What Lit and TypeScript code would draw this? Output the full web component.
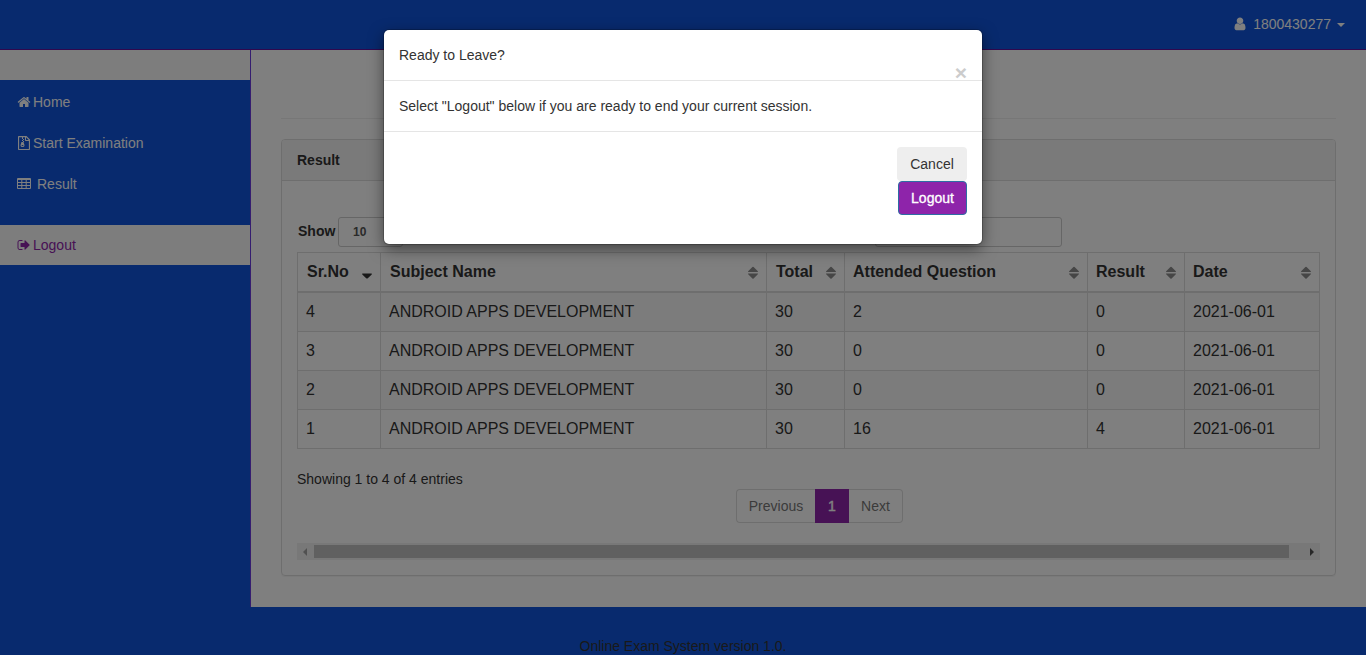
import { LitElement, html, css, svg } from "lit";
import { customElement } from "lit/decorators.js";

const ICONS: Record<string, unknown> = {
  home: svg`<path d="M1472 992v480q0 26-19 45t-45 19h-384v-384h-256v384h-384q-26 0-45-19t-19-45v-480q0-1 .5-3t.5-3l575-474 575 474q1 2 1 6zm223-69l-62 74q-8 9-21 11h-3q-13 0-21-7l-692-577-692 577q-12 8-24 7-13-2-21-11l-62-74q-8-10-7-23.5t11-21.5l719-599q32-26 76-26t76 26l244 204v-195q0-14 9-23t23-9h192q14 0 23 9t9 23v408l219 182q10 8 11 21.5t-7 23.5z"/>`,
  user: svg`<path transform="translate(-90 -60) scale(1.1 1.05)" d="M1536 1399q0 109-62.5 187t-150.5 78h-854q-88 0-150.5-78t-62.5-187q0-85 8.5-160.5t31.5-152 58.5-131 94-89 134.5-34.5q131 128 313 128t313-128q76 0 134.5 34.5t94 89 58.5 131 31.5 152 8.5 160.5zm-256-887q0 159-112.5 271.5t-271.5 112.5-271.5-112.5-112.5-271.5 112.5-271.5 271.5-112.5 271.5 112.5 112.5 271.5z"/>`,
  signout: svg`<path d="M704 1440q0 4 1 20t.5 26.5-3 23.5-10 19.5-20.5 6.5h-320q-119 0-203.5-84.5t-84.5-203.5v-704q0-119 84.5-203.5t203.5-84.5h320q13 0 22.5 9.5t9.5 22.5q0 4 1 20t.5 26.5-3 23.5-10 19.5-20.5 6.5h-320q-66 0-113 47t-47 113v704q0 66 47 113t113 47h312l11.5 1 11.5 3 8 5.5 7 9 2 13.5zm928-544q0 26-19 45l-544 544q-19 19-45 19t-45-19-19-45v-288h-448q-26 0-45-19t-19-45v-384q0-26 19-45t45-19h448v-288q0-26 19-45t45-19 45 19l544 544q19 19 19 45z"/>`,
  table: svg`<path transform="scale(128)" fill-rule="evenodd" d="M1 1h12q1 0 1 1v9q0 1-1 1h-12q-1 0-1-1v-9q0-1 1-1zM1 3v2h3.3v-2zM5.3 3v2h3.4v-2zM9.7 3v2h3.3v-2zM1 6v2h3.3v-2zM5.3 6v2h3.4v-2zM9.7 6v2h3.3v-2zM1 9v2h3.3v-2zM5.3 9v2h3.4v-2zM9.7 9v2h3.3v-2z"/>`,
  archive: svg`<path fill-rule="evenodd" d="M224 0h992l448 448v1248q0 96-96 96h-1344q-96 0-96-96v-1600q0-96 96-96zM272 144v1504h1248v-1024h-400q-96 0-96-96v-384h-256v112h-128v-112zM1152 150v346h346zM640 256h128v128h-128zM768 384h128v128h-128zM640 512h128v128h-128zM768 640h128v128h-128zM640 768h192l112 360q16 50 16 88 0 192-256 192t-256-192q0-38 16-88l112-360h64zM704 1152q-128 0-128 64t128 64 128-64-128-64z"/>`,
};

const icon = (name: string) =>
  html`<span class="fw"><svg width="14" height="14" viewBox="0 0 1792 1792" fill="currentColor">${ICONS[name]}</svg></span>`;

const COLUMNS = ["Sr.No", "Subject Name", "Total", "Attended Question", "Result", "Date"];
const ROWS = [
  ["4", "ANDROID APPS DEVELOPMENT", "30", "2", "0", "2021-06-01"],
  ["3", "ANDROID APPS DEVELOPMENT", "30", "0", "0", "2021-06-01"],
  ["2", "ANDROID APPS DEVELOPMENT", "30", "0", "0", "2021-06-01"],
  ["1", "ANDROID APPS DEVELOPMENT", "30", "16", "4", "2021-06-01"],
];

@customElement("app-root")
export class AppRoot extends LitElement {
  static styles = css`
    :host { display: block; height: 655px; overflow: hidden; position: relative;
      font: 14px/20px "Liberation Sans", Arial, sans-serif; color: #333; background: #fff; }
    * { box-sizing: border-box; }
    .page { display: flex; flex-direction: column; height: 655px; }
    .nav { height: 50px; flex: none; background: #1055dc; border-bottom: 1px solid #60109c;
      display: flex; justify-content: flex-end; align-items: center; padding: 0 21px 1px 0; color: #fff; }
    .fw { display: inline-flex; width: 18px; height: 14px; justify-content: center; flex: none; }
    .fw svg { display: block; overflow: visible; }
    .user { margin: 0 6px 0 4px; }
    .caret { border: 4px solid transparent; border-top-color: currentColor; border-bottom: 0; margin-top: 1px; }
    .main { display: flex; height: 557px; flex: none; }
    .side { width: 251px; flex: none; background: #1055dc; border-right: 1px solid #6a3ae0; color: #fff; }
    .blank { height: 30px; background: #fbfbfb; margin-bottom: 2px; }
    .item { height: 40px; padding: 0 15px; display: flex; align-items: center; margin-bottom: 1px; }
    .item.gap .label { margin-left: 4px; }
    .item.gap .fw { padding-left: 1px; justify-content: flex-start; margin-left: 1px; width: 17px; }
    .item.out { background: #fbfbfb; color: #8e24aa; margin-top: 21px; }
    .content { flex: 1; padding: 68px 30px 0; }
    .rule { height: 1px; background: #eee; margin-bottom: 20px; }
    .panel { height: 437px; border: 1px solid #ddd; border-radius: 4px; box-shadow: 0 1px 1px rgba(0,0,0,.05); }
    .head { height: 41px; background: #f5f5f5; border-bottom: 1px solid #ddd; padding: 10px 15px;
      font-weight: 700; border-radius: 3px 3px 0 0; }
    .body { padding: 36px 15px 0; }
    .tools { display: flex; height: 35px; font-weight: 700; }
    .show { padding: 4px 0 0 1px; width: 41px; }
    .field { height: 30px; border: 1px solid #ccc; border-radius: 3px; font-size: 12px; color: #555; }
    .select { width: 65px; padding: 4px 14px; }
    .search { width: 187px; margin-left: 472px; }
    .grid { border-right: 1px solid #ddd; border-top: 1px solid #ddd; font-size: 16px; }
    .row { display: grid; grid-template-columns: 83px 386px 78px 243px 97px 135px; height: 39px;
      border-bottom: 1px solid #ddd; }
    .row.odd { background: #f9f9f9; }
    .row.th { height: 40px; border-bottom-width: 2px; font-weight: 700; }
    .cell { border-left: 1px solid #ddd; padding: 0 8px; display: flex; align-items: center; }
    .th .cell { padding: 0 8px 0 9px; justify-content: space-between; }
    .th .cell:nth-child(n+4) { padding-left: 8px; }
    .sort { width: 10px; height: 13px; margin: 1px 0 0; flex: none; }
    .info { margin-top: 20px; }
    .pager { display: flex; width: 167px; height: 34px; margin-left: 439px; color: #777; }
    .pg { border: 1px solid #ddd; line-height: 32px; text-align: center; }
    .prev { width: 79px; border-right: 0; border-radius: 4px 0 0 4px; }
    .cur { width: 34px; background: #8e24aa; border-color: #8e24aa; color: #fff; -webkit-text-stroke: .4px #fff; }
    .next { width: 54px; border-left: 0; border-radius: 0 4px 4px 0; }
    .bar { margin-top: 20px; height: 17px; background: #f1f1f1; display: flex; align-items: center; }
    .thumb { flex: none; width: 975px; height: 13px; background: #c1c1c1; margin: 0 21px 0 7px; }
    .arr { border: 4px solid transparent; flex: none; }
    .l { border-right-color: #a3a3a3; border-left: 0; margin-left: 6px; }
    .r { border-left-color: #505050; border-right: 0; }
    .foot { flex: 1; background: #1055dc; text-align: center; padding-top: 29px; }
    .backdrop { position: absolute; inset: 0; background: rgba(0,0,0,.5); }
    .modal { position: absolute; left: 384px; top: 30px; width: 598px; height: 214px; background: #fff;
      border-radius: 5px; box-shadow: 0 5px 15px rgba(0,0,0,.5), 0 0 0 1px rgba(0,0,0,.2); }
    .mh { height: 51px; padding: 15px; border-bottom: 1px solid #e5e5e5; display: flex; justify-content: space-between; }
    .x { font-size: 21px; font-weight: 700; line-height: 21px; color: #ccc; margin-top: 17px; }
    .mb { height: 51px; padding: 15px; border-bottom: 1px solid #e5e5e5; }
    .mf { padding: 15px; display: flex; flex-direction: column; align-items: flex-end; }
    .btn { height: 34px; line-height: 34px; border-radius: 4px; text-align: center; }
    .cancel { width: 70px; background: #eee; }
    .logout { width: 69px; background: #8e24aa; color: #fff; border: 1px solid #2e6da4; line-height: 32px;
      -webkit-text-stroke: .3px #fff; }
  `;

  private sort(active: boolean) {
    return html`<svg class="sort" viewBox="0 0 10 13">
      ${active
        ? svg`<path d="M.5 7.5h9q.8.4 0 1.2l-3.7 3.5q-.8.6-1.6 0l-3.7-3.5q-.8-.8 0-1.2z" fill="#333"/>`
        : svg`<path d="M0 6q0-.6.4-1l4-4q.6-.5 1.2 0l4 4q.4.4.4 1zM0 7.4h10q0 .6-.4 1l-4 4q-.6.5-1.2 0l-4-4q-.4-.4-.4-1z" fill="#8c8c8c"/>`}
    </svg>`;
  }

  render() {
    return html`
      <div class="page">
        <div class="nav">${icon("user")}<span class="user">1800430277</span><i class="caret"></i></div>
        <div class="main">
          <div class="side">
            <div class="blank"></div>
            <div class="item">${icon("home")}<span class="label">Home</span></div>
            <div class="item">${icon("archive")}<span class="label">Start Examination</span></div>
            <div class="item gap">${icon("table")}<span class="label">Result</span></div>
            <div class="item out">${icon("signout")}<span class="label">Logout</span></div>
          </div>
          <div class="content">
            <div class="rule"></div>
            <div class="panel">
              <div class="head">Result</div>
              <div class="body">
                <div class="tools">
                  <span class="show">Show</span>
                  <div class="field select">10</div>
                  <div class="field search"></div>
                </div>
                <div class="grid">
                  <div class="row th">
                    ${COLUMNS.map((c, i) => html`<div class="cell"><span>${c}</span>${this.sort(i === 0)}</div>`)}
                  </div>
                  ${ROWS.map((r, i) => html`<div class="row ${i % 2 ? "" : "odd"}">
                    ${r.map((c) => html`<div class="cell">${c}</div>`)}
                  </div>`)}
                </div>
                <div class="info">Showing 1 to 4 of 4 entries</div>
                <div class="pager"><span class="pg prev">Previous</span><span class="pg cur">1</span><span class="pg next">Next</span></div>
                <div class="bar"><i class="arr l"></i><div class="thumb"></div><i class="arr r"></i></div>
              </div>
            </div>
          </div>
        </div>
        <div class="foot">Online Exam System version 1.0.</div>
      </div>
      <div class="backdrop"></div>
      <div class="modal">
        <div class="mh"><span>Ready to Leave?</span><span class="x">×</span></div>
        <div class="mb">Select "Logout" below if you are ready to end your current session.</div>
        <div class="mf"><div class="btn cancel">Cancel</div><div class="btn logout">Logout</div></div>
      </div>
    `;
  }
}
